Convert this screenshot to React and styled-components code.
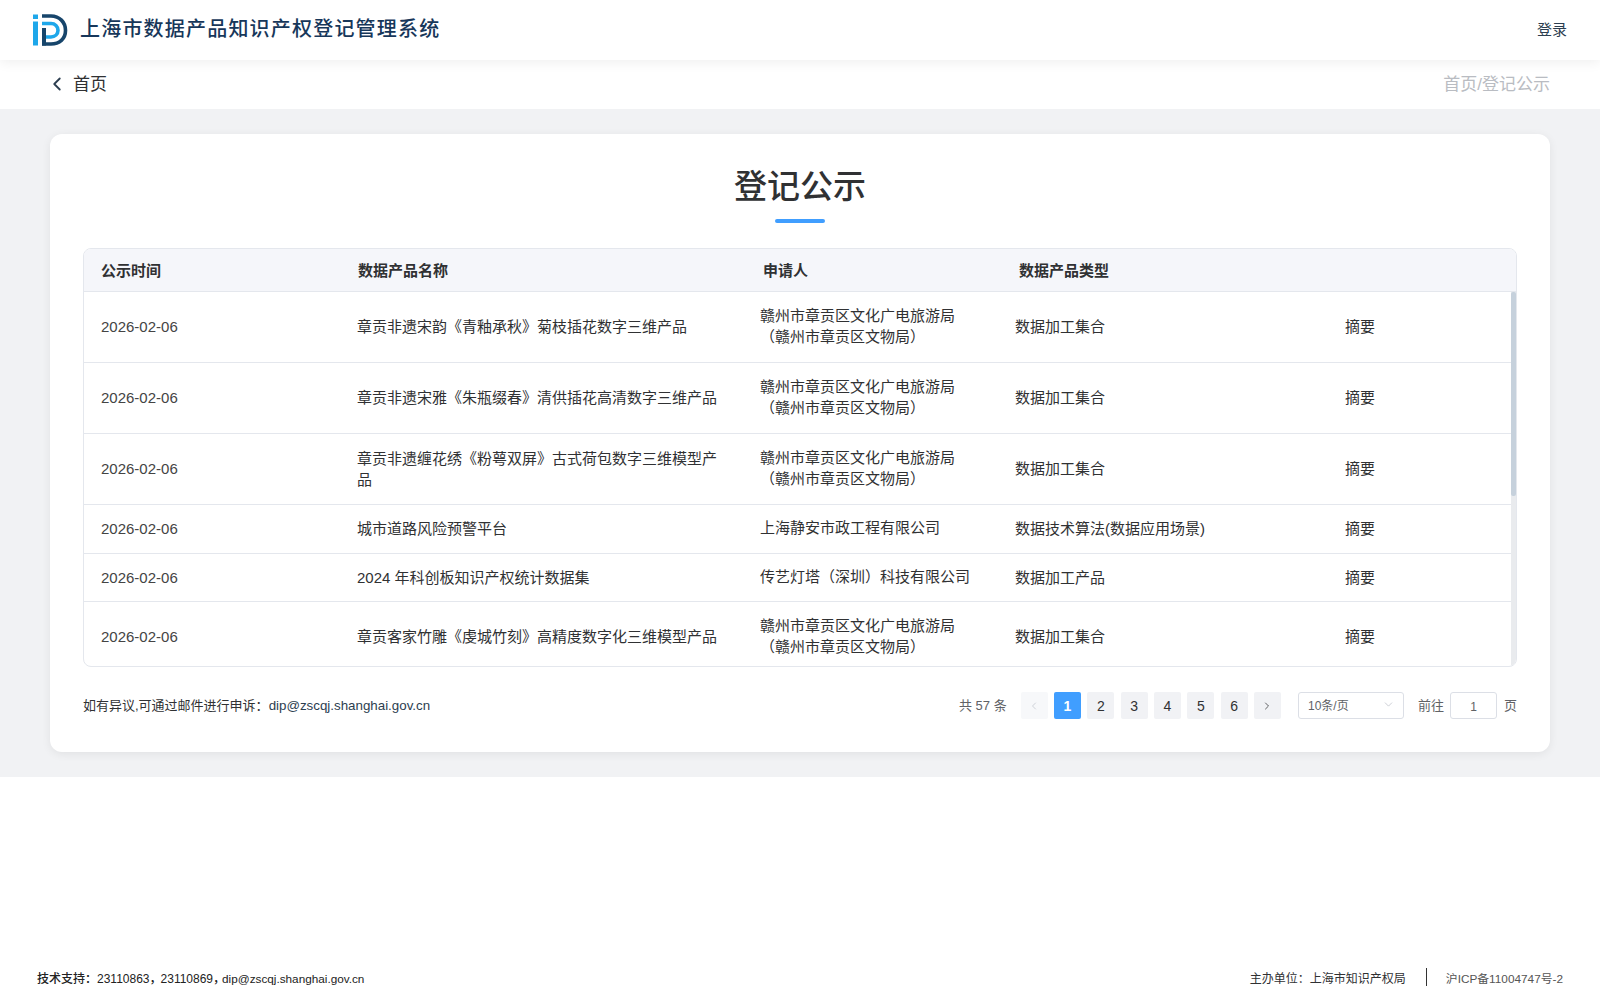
import React from "react";
import styled, { createGlobalStyle } from "styled-components";
import { ChevronLeft, ChevronRight, ChevronDown } from "lucide-react";

const SANS = `"Liberation Sans", "Noto Sans CJK SC", sans-serif`;

const GlobalStyle = createGlobalStyle`
  html, body {
    margin: 0;
    padding: 0;
    background: #fff;
    font-family: ${SANS};
    color: #303133;
  }
  * {
    box-sizing: border-box;
  }
`;

const rows = [
  { date: "2026-02-06", name: "章贡非遗宋韵《青釉承秋》菊枝插花数字三维产品", applicant: ["赣州市章贡区文化广电旅游局", "（赣州市章贡区文物局）"], type: "数据加工集合" },
  { date: "2026-02-06", name: "章贡非遗宋雅《朱瓶缀春》清供插花高清数字三维产品", applicant: ["赣州市章贡区文化广电旅游局", "（赣州市章贡区文物局）"], type: "数据加工集合" },
  { date: "2026-02-06", name: "章贡非遗缠花绣《粉萼双屏》古式荷包数字三维模型产品", applicant: ["赣州市章贡区文化广电旅游局", "（赣州市章贡区文物局）"], type: "数据加工集合" },
  { date: "2026-02-06", name: "城市道路风险预警平台", applicant: ["上海静安市政工程有限公司"], type: "数据技术算法(数据应用场景)" },
  { date: "2026-02-06", name: "2024 年科创板知识产权统计数据集", applicant: ["传艺灯塔（深圳）科技有限公司"], type: "数据加工产品" },
  { date: "2026-02-06", name: "章贡客家竹雕《虔城竹刻》高精度数字化三维模型产品", applicant: ["赣州市章贡区文化广电旅游局", "（赣州市章贡区文物局）"], type: "数据加工集合" },
];

const Logo = () => (
  <svg width="36" height="33" viewBox="0 0 36 33" fill="none">
    <rect x="1" y="0.5" width="5" height="4.5" fill="#1ea7ea" />
    <rect x="1" y="7.5" width="5" height="24" fill="#1ea7ea" />
    <path d="M10 2H19C27.5 2 33.5 8.2 33.5 16.5S27.5 30 19 30H10" stroke="#17456b" strokeWidth="3.6" />
    <path d="M10 9.5H19C23 9.5 26 12.5 26 16.3S23 23 19 23H13.5" stroke="#1ea7ea" strokeWidth="3.6" />
    <rect x="10" y="14" width="4" height="17.5" fill="#17456b" />
  </svg>
);

const App = () => {
  return (
    <Page>
      <GlobalStyle />
      <Header>
        <Brand>
          <Logo />
          <SystemName>上海市数据产品知识产权登记管理系统</SystemName>
        </Brand>
        <Login>登录</Login>
      </Header>

      <SubBar>
        <BackLink>
          <ChevronLeft size={22} strokeWidth={2} />
          <span>首页</span>
        </BackLink>
        <Crumb>首页/登记公示</Crumb>
      </SubBar>

      <Main>
        <Card>
          <Title>登记公示</Title>
          <TitleBar />

          <TableWrap>
            <HeadRow>
              <HeadCell $w={257}>公示时间</HeadCell>
              <HeadCell $w={405}>数据产品名称</HeadCell>
              <HeadCell $w={256}>申请人</HeadCell>
              <HeadCell>数据产品类型</HeadCell>
            </HeadRow>
            <TableBody>
              {rows.map((row, i) => (
                <Row key={i} $tall={row.applicant.length > 1}>
                  <DateCell>{row.date}</DateCell>
                  <NameCell>{row.name}</NameCell>
                  <ApplicantCell>
                    {row.applicant.map((line) => (
                      <div key={line}>{line}</div>
                    ))}
                  </ApplicantCell>
                  <div>{row.type}</div>
                  <ActionCell>摘要</ActionCell>
                </Row>
              ))}
            </TableBody>
            <ScrollTrack>
              <ScrollThumb />
            </ScrollTrack>
          </TableWrap>

          <ListFooter>
            <Notice>
              如有异议,可通过邮件进行申诉：<Email>dip@zscqj.shanghai.gov.cn</Email>
            </Notice>
            <Pager>
              <PagerText $gap={8}>共 57 条</PagerText>
              <PageList>
                <PageBtn $disabled>
                  <ChevronLeft size={12} strokeWidth={1.5} />
                </PageBtn>
                {[1, 2, 3, 4, 5, 6].map((n) => (
                  <PageBtn key={n} $active={n === 1}>
                    {n}
                  </PageBtn>
                ))}
                <PageBtn>
                  <ChevronRight size={12} strokeWidth={1.5} />
                </PageBtn>
              </PageList>
              <SizeSelect>
                <span>10条/页</span>
                <ChevronDown size={13} strokeWidth={1.3} color="#b8bcc4" />
              </SizeSelect>
              <JumpLabel>前往</JumpLabel>
              <JumpInput>1</JumpInput>
              <PagerText>页</PagerText>
            </Pager>
          </ListFooter>
        </Card>
      </Main>

      <Footer>
        <Support>
          <b>技术支持：</b>23110863<Sep>，</Sep>23110869<Sep>，</Sep>
          <SupportMail>dip@zscqj.shanghai.gov.cn</SupportMail>
        </Support>
        <Owner>
          <span>主办单位：上海市知识产权局</span>
          <Divider />
          <Icp>沪ICP备11004747号-2</Icp>
        </Owner>
      </Footer>
    </Page>
  );
};

export default App;

const Page = styled.div`
  height: 1000px;
  display: flex;
  flex-direction: column;
  overflow: hidden;
`;

const Header = styled.header`
  height: 60px;
  flex: none;
  display: flex;
  align-items: center;
  justify-content: space-between;
  padding: 0 33px 0 32px;
  background: #fff;
  box-shadow: 0 2px 12px rgba(0, 0, 0, 0.07);
  position: relative;
  z-index: 2;
`;

const Brand = styled.div`
  display: flex;
  align-items: center;
  gap: 12px;
`;

const SystemName = styled.div`
  font-size: 20px;
  font-weight: 500;
  letter-spacing: 1.2px;
  color: #17375a;
  padding-bottom: 6px;
`;

const Login = styled.div`
  font-size: 15px;
  color: #2c3e50;
  padding-bottom: 4px;
`;

const SubBar = styled.div`
  height: 49px;
  flex: none;
  display: flex;
  align-items: center;
  justify-content: space-between;
  padding: 0 50px 4px 46px;
  background: #fff;
  font-size: 17px;
`;

const BackLink = styled.div`
  display: flex;
  align-items: center;
  gap: 5px;
  color: #303133;

  svg {
    color: #2c3e50;
    margin-top: 2px;
  }
`;

const Crumb = styled.div`
  color: #b9bcc2;
`;

const Main = styled.main`
  flex: none;
  background: #f1f2f4;
  padding: 25px 50px;
`;

const Card = styled.section`
  height: 618px;
  background: #fff;
  border-radius: 12px;
  box-shadow: 0 2px 10px rgba(0, 0, 0, 0.07);
  padding: 30px 33px 0;
  display: flex;
  flex-direction: column;
`;

const Title = styled.h1`
  margin: 0;
  text-align: center;
  font-size: 33px;
  line-height: 46px;
  font-weight: 500;
  color: #303133;
`;

const TitleBar = styled.div`
  width: 50px;
  height: 4px;
  margin: 9px auto 25px;
  border-radius: 2px;
  background: #409eff;
`;

const TableWrap = styled.div`
  position: relative;
  height: 419px;
  flex: none;
  border: 1px solid #e4e7ed;
  border-radius: 8px;
  overflow: hidden;
  display: flex;
  flex-direction: column;
`;

const HeadRow = styled.div`
  height: 43px;
  flex: none;
  display: flex;
  align-items: center;
  padding: 0 0 2px 17px;
  background: #f5f6fa;
  border-bottom: 1px solid #e4e7ed;
`;

const HeadCell = styled.div`
  width: ${(p) => (p.$w ? `${p.$w}px` : "auto")};
  font-size: 15px;
  font-weight: 700;
  color: #303133;
`;

const TableBody = styled.div`
  flex: 1;
  overflow: hidden;
`;

const ScrollTrack = styled.div`
  position: absolute;
  top: 43px;
  right: 0;
  bottom: 0;
  width: 5px;
  background: #e9ebee;
`;

const ScrollThumb = styled.div`
  height: 204px;
  border-radius: 2px;
  background: #c6d1dc;
`;

const Row = styled.div`
  height: ${(p) => (p.$tall ? "71px" : "48.5px")};
  display: grid;
  grid-template-columns: 256px 403px 255px 330px 1fr;
  align-items: center;
  padding-left: 17px;
  border-bottom: 1px solid #e4e7ed;
  font-size: 15px;
  line-height: 21.5px;
  color: #303133;
`;

const DateCell = styled.div`
  color: #444;
`;

const NameCell = styled.div`
  padding-right: 34px;
`;

const ApplicantCell = styled.div`
  padding-bottom: 2px;
`;

const ActionCell = styled.div`
  cursor: pointer;
`;

const ListFooter = styled.div`
  height: 77px;
  flex: none;
  display: flex;
  align-items: center;
  justify-content: space-between;
`;

const Notice = styled.div`
  font-size: 13px;
  color: #303133;
  padding-bottom: 2px;
`;

const Email = styled.span`
  font-size: 13.33px;
  color: #2c3e50;
`;

const Pager = styled.div`
  display: flex;
  align-items: center;
  gap: 6px;
  font-size: 13px;
  color: #606266;
`;

const PagerText = styled.span`
  margin-right: ${(p) => p.$gap || 0}px;
  margin-left: ${(p) => (p.$gap ? 0 : 1)}px;
  padding-bottom: 2px;
`;

const PageList = styled.div`
  display: flex;
  gap: 6.33px;
`;

const PageBtn = styled.div`
  width: 27px;
  height: 27px;
  display: flex;
  align-items: center;
  justify-content: center;
  border-radius: 2px;
  font-size: 14px;
  font-weight: ${(p) => (p.$active ? 700 : 400)};
  color: ${(p) => (p.$active ? "#fff" : p.$disabled ? "#c0c4cc" : "#303133")};
  background: ${(p) => (p.$active ? "#409eff" : p.$disabled ? "#f7f8fa" : "#f1f2f5")};
`;

const SizeSelect = styled.div`
  width: 106px;
  height: 27px;
  margin-left: 11px;
  padding: 0 8px 2px 9px;
  display: flex;
  align-items: center;
  justify-content: space-between;
  border: 1px solid #dcdfe6;
  border-radius: 3px;
  font-size: 12px;
  color: #606266;
`;

const JumpLabel = styled.span`
  margin-left: 8px;
  padding-bottom: 2px;
`;

const JumpInput = styled.div`
  width: 47px;
  height: 27px;
  padding-top: 2px;
  display: flex;
  align-items: center;
  justify-content: center;
  border: 1px solid #dcdfe6;
  border-radius: 3px;
  font-size: 12px;
  color: #606266;
`;

const Footer = styled.footer`
  margin-top: auto;
  height: 46px;
  flex: none;
  display: flex;
  align-items: center;
  justify-content: space-between;
  padding: 0 37px;
  font-size: 12px;
  color: #303133;
`;

const Support = styled.div`
  color: #222;

  b {
    font-weight: 500;
  }
`;

const SupportMail = styled.span`
  font-size: 11.75px;
  margin-left: -2px;
`;

const Sep = styled.b`
  margin-right: -1px;
`;

const Owner = styled.div`
  display: flex;
  align-items: center;
`;

const Divider = styled.i`
  width: 1px;
  height: 18px;
  margin: 0 19px 0 20px;
  background: #333;
`;

const Icp = styled.span`
  font-size: 11.8px;
  color: #555;
`;
